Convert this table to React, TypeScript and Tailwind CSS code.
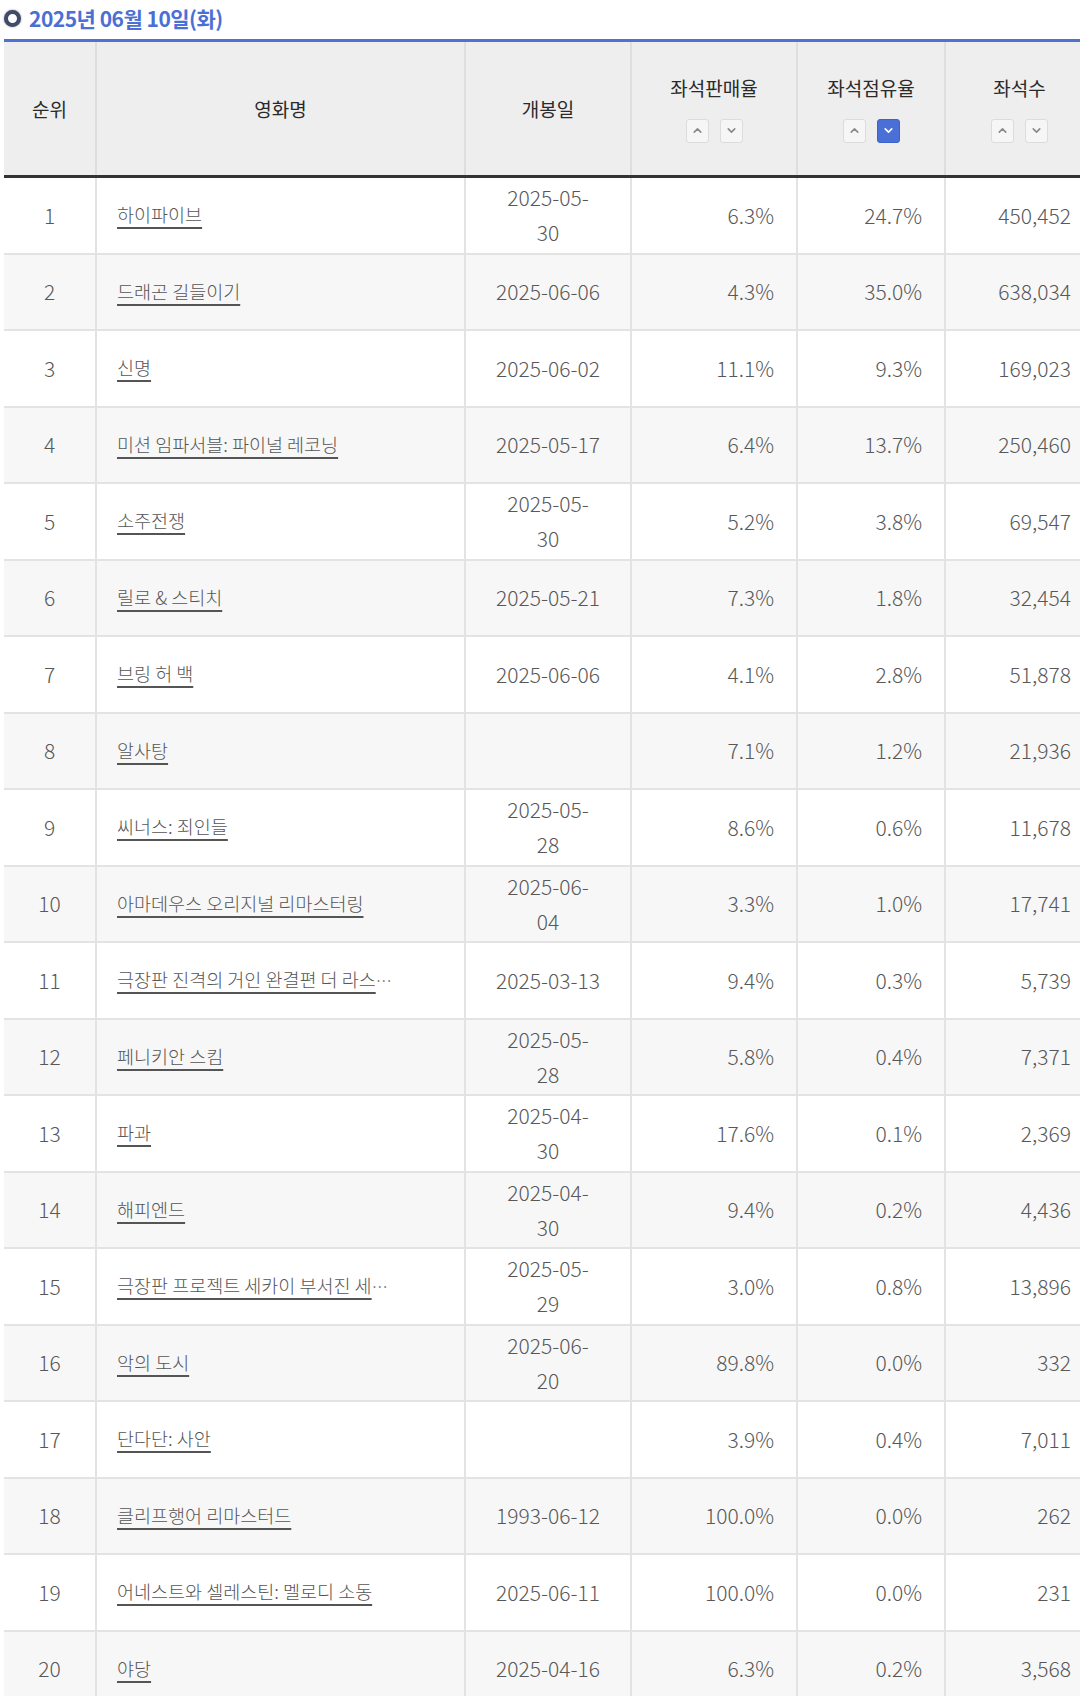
import { ChevronDown, ChevronUp } from "lucide-react";

type Row = {
  rank: number;
  title: string;
  cut?: boolean;
  open: string[];
  salesRate: string;
  shareRate: string;
  seats: string;
};

const rows: Row[] = [
  { rank: 1, title: "하이파이브", open: ["2025-05-", "30"], salesRate: "6.3%", shareRate: "24.7%", seats: "450,452" },
  { rank: 2, title: "드래곤 길들이기", open: ["2025-06-06"], salesRate: "4.3%", shareRate: "35.0%", seats: "638,034" },
  { rank: 3, title: "신명", open: ["2025-06-02"], salesRate: "11.1%", shareRate: "9.3%", seats: "169,023" },
  { rank: 4, title: "미션 임파서블: 파이널 레코닝", open: ["2025-05-17"], salesRate: "6.4%", shareRate: "13.7%", seats: "250,460" },
  { rank: 5, title: "소주전쟁", open: ["2025-05-", "30"], salesRate: "5.2%", shareRate: "3.8%", seats: "69,547" },
  { rank: 6, title: "릴로 & 스티치", open: ["2025-05-21"], salesRate: "7.3%", shareRate: "1.8%", seats: "32,454" },
  { rank: 7, title: "브링 허 백", open: ["2025-06-06"], salesRate: "4.1%", shareRate: "2.8%", seats: "51,878" },
  { rank: 8, title: "알사탕", open: [], salesRate: "7.1%", shareRate: "1.2%", seats: "21,936" },
  { rank: 9, title: "씨너스: 죄인들", open: ["2025-05-", "28"], salesRate: "8.6%", shareRate: "0.6%", seats: "11,678" },
  { rank: 10, title: "아마데우스 오리지널 리마스터링", open: ["2025-06-", "04"], salesRate: "3.3%", shareRate: "1.0%", seats: "17,741" },
  { rank: 11, title: "극장판 진격의 거인 완결편 더 라스", cut: true, open: ["2025-03-13"], salesRate: "9.4%", shareRate: "0.3%", seats: "5,739" },
  { rank: 12, title: "페니키안 스킴", open: ["2025-05-", "28"], salesRate: "5.8%", shareRate: "0.4%", seats: "7,371" },
  { rank: 13, title: "파과", open: ["2025-04-", "30"], salesRate: "17.6%", shareRate: "0.1%", seats: "2,369" },
  { rank: 14, title: "해피엔드", open: ["2025-04-", "30"], salesRate: "9.4%", shareRate: "0.2%", seats: "4,436" },
  { rank: 15, title: "극장판 프로젝트 세카이 부서진 세", cut: true, open: ["2025-05-", "29"], salesRate: "3.0%", shareRate: "0.8%", seats: "13,896" },
  { rank: 16, title: "악의 도시", open: ["2025-06-", "20"], salesRate: "89.8%", shareRate: "0.0%", seats: "332" },
  { rank: 17, title: "단다단: 사안", open: [], salesRate: "3.9%", shareRate: "0.4%", seats: "7,011" },
  { rank: 18, title: "클리프행어 리마스터드", open: ["1993-06-12"], salesRate: "100.0%", shareRate: "0.0%", seats: "262" },
  { rank: 19, title: "어네스트와 셀레스틴: 멜로디 소동", open: ["2025-06-11"], salesRate: "100.0%", shareRate: "0.0%", seats: "231" },
  { rank: 20, title: "야당", open: ["2025-04-16"], salesRate: "6.3%", shareRate: "0.2%", seats: "3,568" },
];

const gridCols = "grid grid-cols-[93px_369px_166px_166px_148px_147px]";

function SortButtons({ active }: { active?: "up" | "down" }) {
  return (
    <div className="flex gap-[11px]">
      <button
        className={`w-[23px] h-[24px] rounded-[3px] border flex items-center justify-center ${
          active === "up" ? "bg-[#4a70d8] border-[#3d62c8] text-white" : "bg-[#f6f6f6] border-[#dcdcdc] text-[#8a8a8a]"
        }`}
      >
        <ChevronUp className="w-[13px] h-[13px]" strokeWidth={3} />
      </button>
      <button
        className={`w-[23px] h-[24px] rounded-[3px] border flex items-center justify-center ${
          active === "down" ? "bg-[#4a70d8] border-[#3d62c8] text-white" : "bg-[#f6f6f6] border-[#dcdcdc] text-[#8a8a8a]"
        }`}
      >
        <ChevronDown className="w-[13px] h-[13px]" strokeWidth={3} />
      </button>
    </div>
  );
}

function HeaderCell({ label, sort, active, last }: { label: string; sort?: boolean; active?: "up" | "down"; last?: boolean }) {
  return (
    <div
      className={`flex flex-col items-center justify-center gap-[18px] ${last ? "" : "border-r-2 border-[#dedede]"}`}
    >
      <span className="text-[19px] leading-[26px] text-[#2a2a2a]">{label}</span>
      {sort && <SortButtons active={active} />}
    </div>
  );
}

export default function App() {
  return (
    <div
      className="w-[1080px] overflow-hidden bg-white"
      style={{ fontFamily: '"Noto Sans CJK KR", "Noto Sans", sans-serif' }}
    >
      {/* 날짜 제목 */}
      <div className="h-[39px] flex items-center gap-[8px] pl-[4px] pb-[2px]">
        <span className="w-[17px] h-[17px] rounded-full border-[4px] border-[#3f4b68] bg-white shadow-[0_0_2px_rgba(40,50,80,0.6)]" />
        <h2 className="text-[21px] font-bold text-[#4b6fd3] tracking-[-0.5px]">2025년 06월 10일(화)</h2>
      </div>

      <div className="w-[1089px] ml-[4px]">
        {/* 헤더 */}
        <div className={`${gridCols} h-[139px] bg-[#eeeeee] border-t-[3px] border-[#4f72cf] border-b-[3px] border-b-[#333333]`}>
          <HeaderCell label="순위" />
          <HeaderCell label="영화명" />
          <HeaderCell label="개봉일" />
          <HeaderCell label="좌석판매율" sort />
          <HeaderCell label="좌석점유율" sort active="down" />
          <HeaderCell label="좌석수" sort last />
        </div>

        {/* 목록 */}
        {rows.map((row) => (
          <div
            key={row.rank}
            className={`${gridCols} h-[76.5px] border-b-2 border-[#e3e3e3] text-[#585858] font-light ${
              row.rank % 2 === 0 ? "bg-[#f7f7f7]" : "bg-white"
            }`}
          >
            <div className="flex items-center justify-center border-r-2 border-[#e3e3e3] text-[21px]">{row.rank}</div>
            <div className="flex items-center pl-[20px] border-r-2 border-[#e3e3e3] text-[18.5px]">
              <a href="#" className="underline underline-offset-[5px] decoration-[1.5px] text-[#555555] whitespace-nowrap">
                {row.title}
              </a>
              {row.cut && <span className="text-[16px]">…</span>}
            </div>
            <div className="flex flex-col items-center justify-center border-r-2 border-[#e3e3e3] text-[21px] leading-[35px]">
              {row.open.map((line, i) => (
                <span key={i}>{line}</span>
              ))}
            </div>
            <div className="flex items-center justify-end pr-[22px] border-r-2 border-[#e3e3e3] text-[21px]">{row.salesRate}</div>
            <div className="flex items-center justify-end pr-[22px] border-r-2 border-[#e3e3e3] text-[21px]">{row.shareRate}</div>
            <div className="flex items-center justify-end pr-[22px] text-[21px]">{row.seats}</div>
          </div>
        ))}
      </div>
    </div>
  );
}
